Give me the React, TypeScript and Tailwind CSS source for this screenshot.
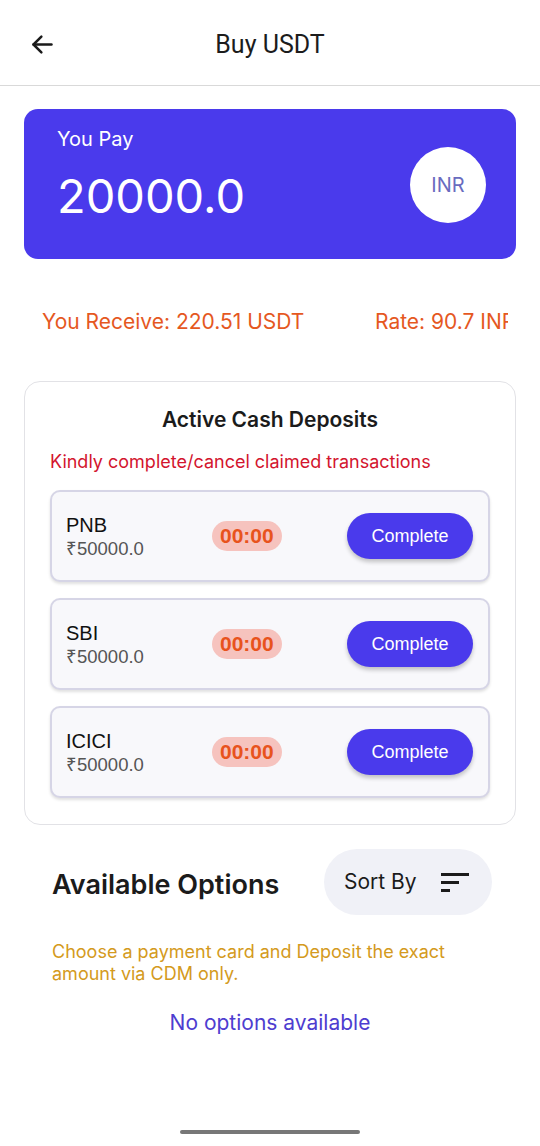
import React from "react";

const deposits = [
  { bank: "PNB", amount: "₹50000.0" },
  { bank: "SBI", amount: "₹50000.0" },
  { bank: "ICICI", amount: "₹50000.0" },
];

export default function App() {
  return (
    <div className="w-[540px] h-[1146px] bg-white relative overflow-hidden font-['Inter',sans-serif]">
      {/* Header */}
      <div className="h-[86px] border-b border-[#d9d9d9] flex items-center relative">
        <div className="absolute left-[29px] top-[31px]">
          <svg width="27" height="27" viewBox="0 0 24 24" fill="none" stroke="#1a1a1a" strokeWidth="2.2" strokeLinecap="round" strokeLinejoin="round">
            <path d="M20 12H4" />
            <path d="M11 5l-7 7 7 7" />
          </svg>
        </div>
        <div className="w-full text-center text-[25px] leading-[30px] text-[#1c1c1c] font-['Roboto',sans-serif] mt-[4px]">Buy USDT</div>
      </div>

      {/* You Pay card */}
      <div className="mx-[24px] mt-[23px] h-[150px] rounded-[14px] bg-[#4a3aec] flex items-center justify-between pl-[33px] pr-[30px]">
        <div className="flex flex-col -mt-[18px]">
          <div className="text-white text-[20px] leading-[24px]">You Pay</div>
          <div className="text-white text-[47px] leading-[56px] mt-[17px]">20000.0</div>
        </div>
        <div className="w-[76px] h-[76px] rounded-full bg-white flex items-center justify-center mt-[2px]">
          <span className="text-[20px] text-[#6a6cbf]">INR</span>
        </div>
      </div>

      {/* Receive / Rate */}
      <div className="mt-[50px] h-[26px] flex justify-between pl-[42px] pr-[32px] overflow-hidden text-[21px] text-[#e5581f] leading-[26px] whitespace-nowrap">
        <span>You Receive: 220.51 USDT</span>
        <span className="w-[133px] overflow-hidden">Rate: 90.7 INR</span>
      </div>

      {/* Active cash deposits */}
      <div className="mx-[24px] mt-[46px] h-[444px] rounded-[16px] border border-[#e2e2e6] pt-[24px] px-[25px]">
        <div className="text-center text-[21px] font-semibold text-[#1b1b1b] leading-[28px]">Active Cash Deposits</div>
        <div className="mt-[16px] text-[18px] text-[#d3152e] leading-[24px]">Kindly complete/cancel claimed transactions</div>
        <div className="mt-[16px] flex flex-col gap-[16px]">
          {deposits.map((d) => (
            <div
              key={d.bank}
              className="h-[92px] rounded-[10px] bg-[#f8f8fb] border-2 border-[#d6d5e6] shadow-[0_2px_3px_rgba(0,0,0,0.12)] flex items-center pl-[14px] pr-[15px]"
            >
              <div className="w-[146px] flex flex-col font-['Liberation_Sans',Arial,sans-serif] mt-[2px]">
                <span className="text-[20px] text-[#111] leading-[24px]">{d.bank}</span>
                <span className="text-[18.5px] text-[#555] leading-[24px]">{d.amount}</span>
              </div>
              <div className="h-[30px] px-[8px] rounded-full bg-[#f6c3be] flex items-center text-[21px] font-bold text-[#e8531d] font-['Liberation_Sans',Arial,sans-serif]">
                00:00
              </div>
              <div className="flex-1" />
              <div className="w-[126px] h-[46px] rounded-full bg-[#4a3aec] flex items-center justify-center text-white text-[18px] shadow-[0_3px_4px_rgba(0,0,0,0.22)] font-['Liberation_Sans',Arial,sans-serif]">
                Complete
              </div>
            </div>
          ))}
        </div>
      </div>

      {/* Available options */}
      <div className="mt-[24px] pl-[52px] pr-[48px] flex items-center justify-between">
        <span className="text-[27px] font-semibold text-[#1b1b1b] mt-[6px]">Available Options</span>
        <div className="w-[168px] h-[66px] rounded-full bg-[#f0f1f7] flex items-center pl-[20px] gap-[24px]">
          <span className="text-[21px] text-[#1b1b1b]">Sort By</span>
          <svg width="28" height="20" viewBox="0 0 28 20">
            <rect x="0" y="1" width="28" height="3" fill="#1b1b1b" />
            <rect x="0" y="9" width="18" height="3" fill="#1b1b1b" />
            <rect x="0" y="17" width="9" height="3" fill="#1b1b1b" />
          </svg>
        </div>
      </div>
      <div className="mt-[26px] pl-[52px] pr-[60px] text-[18px] leading-[22px] text-[#d49a20]">
        Choose a payment card and Deposit the exact amount via CDM only.
      </div>
      <div className="mt-[22px] text-center text-[21px] text-[#4e3dd0]">No options available</div>

      {/* Home indicator */}
      <div className="absolute left-[180px] top-[1130px] w-[180px] h-[4px] rounded-full bg-[#777]" />
    </div>
  );
}
